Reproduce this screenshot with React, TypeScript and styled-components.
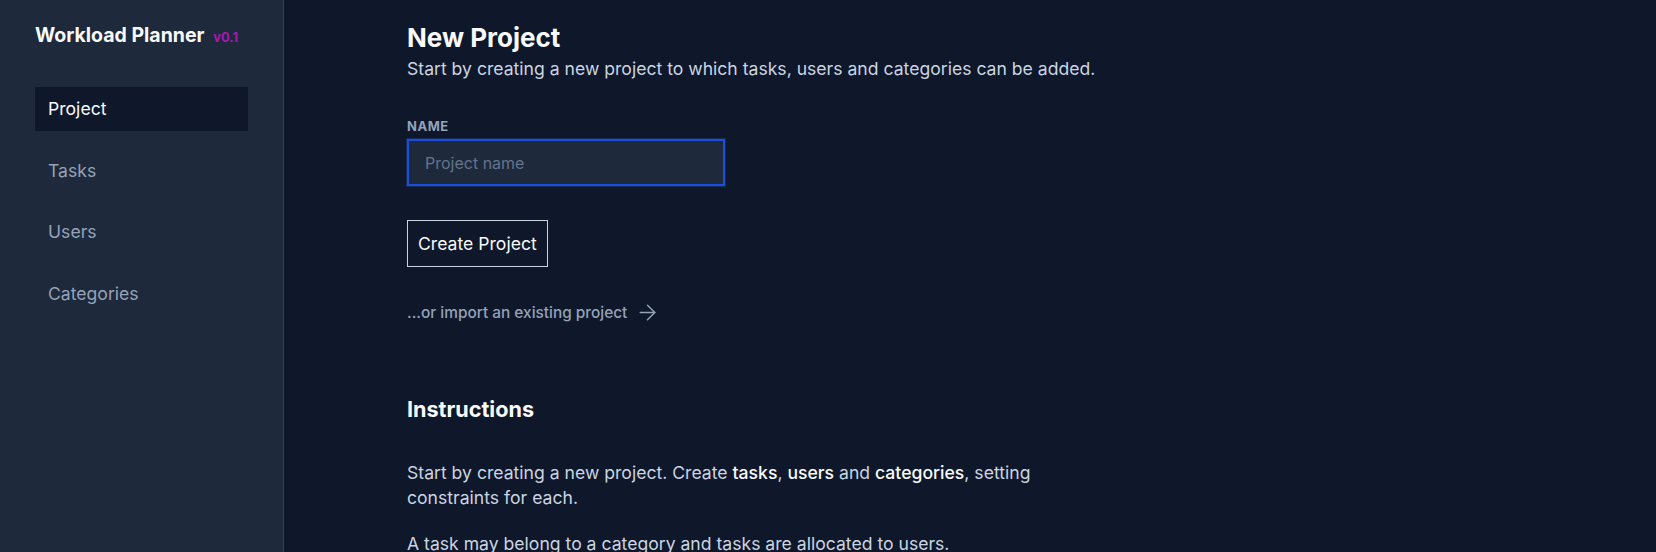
import { useState } from 'react';
import styled, { createGlobalStyle } from 'styled-components';
import { ArrowRight } from 'lucide-react';

const GlobalStyle = createGlobalStyle`
  html, body {
    margin: 0;
    padding: 0;
    background-color: #0f172a;
    font-family: Inter, "Noto Sans", "Liberation Sans", sans-serif;
  }
  * {
    box-sizing: border-box;
  }
`;

const NAV_ITEMS = ['Project', 'Tasks', 'Users', 'Categories'];

export default function App() {
  const [active, setActive] = useState('Project');
  const [name, setName] = useState('');

  return (
    <>
      <GlobalStyle />
      <Layout>
        <Sidebar>
          <Brand>
            Workload Planner <Version>v0.1</Version>
          </Brand>
          <Nav>
            {NAV_ITEMS.map((item) => (
              <NavItem
                key={item}
                type="button"
                $active={item === active}
                onClick={() => setActive(item)}
              >
                {item}
              </NavItem>
            ))}
          </Nav>
        </Sidebar>

        <Main>
          <Heading>New Project</Heading>
          <Lead>Start by creating a new project to which tasks, users and categories can be added.</Lead>

          <Field>
            <Label htmlFor="project-name">Name</Label>
            <Input
              id="project-name"
              placeholder="Project name"
              value={name}
              autoFocus
              onChange={(e) => setName(e.target.value)}
            />
          </Field>

          <CreateButton type="button">Create Project</CreateButton>

          <ImportLink href="#">
            ...or import an existing project
            <ArrowRight size={25} strokeWidth={1.4} />
          </ImportLink>

          <SubHeading>Instructions</SubHeading>
          <Paragraph>
            Start by creating a new project. Create <Strong>tasks</Strong>, <Strong>users</Strong> and{' '}
            <Strong>categories</Strong>, setting constraints for each.
          </Paragraph>
          <Paragraph>A task may belong to a category and tasks are allocated to users.</Paragraph>
        </Main>
      </Layout>
    </>
  );
}

// ─── Styled Components ───────────────────────────────────────────

const Layout = styled.div`
  display: flex;
  min-height: 100vh;
  background-color: #0f172a;
`;

const Sidebar = styled.aside`
  flex: 0 0 284px;
  display: flex;
  flex-direction: column;
  padding: 21px 35px;
  background-color: #1e293b;
  border-right: 1px solid #334155;
`;

const Brand = styled.div`
  font-size: 19.5px;
  line-height: 28px;
  font-weight: 700;
  color: #f8fafc;
  white-space: nowrap;
`;

const Version = styled.span`
  margin-left: 4px;
  font-size: 13px;
  font-weight: 700;
  color: #a21caf;
`;

const Nav = styled.nav`
  display: flex;
  flex-direction: column;
  gap: 17.5px;
  margin-top: 35.5px;
`;

const NavItem = styled.button<{ $active: boolean }>`
  display: flex;
  align-items: center;
  height: 44px;
  padding: 0 13px;
  border: none;
  background-color: ${(p) => (p.$active ? '#0f172a' : 'transparent')};
  color: ${(p) => (p.$active ? '#f8fafc' : '#94a3b8')};
  font-family: inherit;
  font-size: 17.6px;
  text-align: left;
  cursor: pointer;
`;

const Main = styled.main`
  flex: 1;
  display: flex;
  flex-direction: column;
  align-items: flex-start;
  padding: 22px 0 0 123px;
`;

const Heading = styled.h1`
  margin: 0;
  font-size: 26px;
  line-height: 32px;
  font-weight: 700;
  color: #f8fafc;
`;

const Lead = styled.p`
  margin: 1px 0 0;
  font-size: 17.6px;
  line-height: 28px;
  color: #cbd5e1;
`;

const Field = styled.div`
  display: flex;
  flex-direction: column;
  gap: 3px;
  margin-top: 33px;
`;

const Label = styled.label`
  font-size: 13px;
  line-height: 20px;
  font-weight: 700;
  letter-spacing: 0.04em;
  text-transform: uppercase;
  color: #94a3b8;
`;

const Input = styled.input`
  width: 318px;
  height: 47px;
  padding: 0 16px;
  border: 2px solid #1d4ed8;
  background-color: #1e293b;
  color: #f8fafc;
  font-family: inherit;
  font-size: 16px;
  outline: none;
  box-shadow: 0 0 0 1px rgba(37, 99, 235, 0.25);

  &::placeholder {
    color: #64748b;
  }
`;

const CreateButton = styled.button`
  margin-top: 34px;
  padding: 10px;
  border: 1px solid #cbd5e1;
  background-color: transparent;
  color: #f8fafc;
  font-family: inherit;
  font-size: 17.6px;
  line-height: 25px;
  cursor: pointer;
`;

const ImportLink = styled.a`
  display: flex;
  align-items: center;
  gap: 8px;
  margin-top: 33px;
  font-size: 15.4px;
  line-height: 24px;
  font-weight: 500;
  color: #94a3b8;
  text-decoration: none;
`;

const SubHeading = styled.h2`
  margin: 70px 0 0;
  font-size: 21.6px;
  line-height: 28px;
  font-weight: 700;
  color: #f8fafc;
`;

const Paragraph = styled.p`
  max-width: 660px;
  margin: 37px 0 0;
  font-size: 17.6px;
  line-height: 25px;
  color: #cbd5e1;

  & + & {
    margin-top: 21px;
  }
`;

const Strong = styled.strong`
  font-weight: 500;
  color: #f8fafc;
`;
